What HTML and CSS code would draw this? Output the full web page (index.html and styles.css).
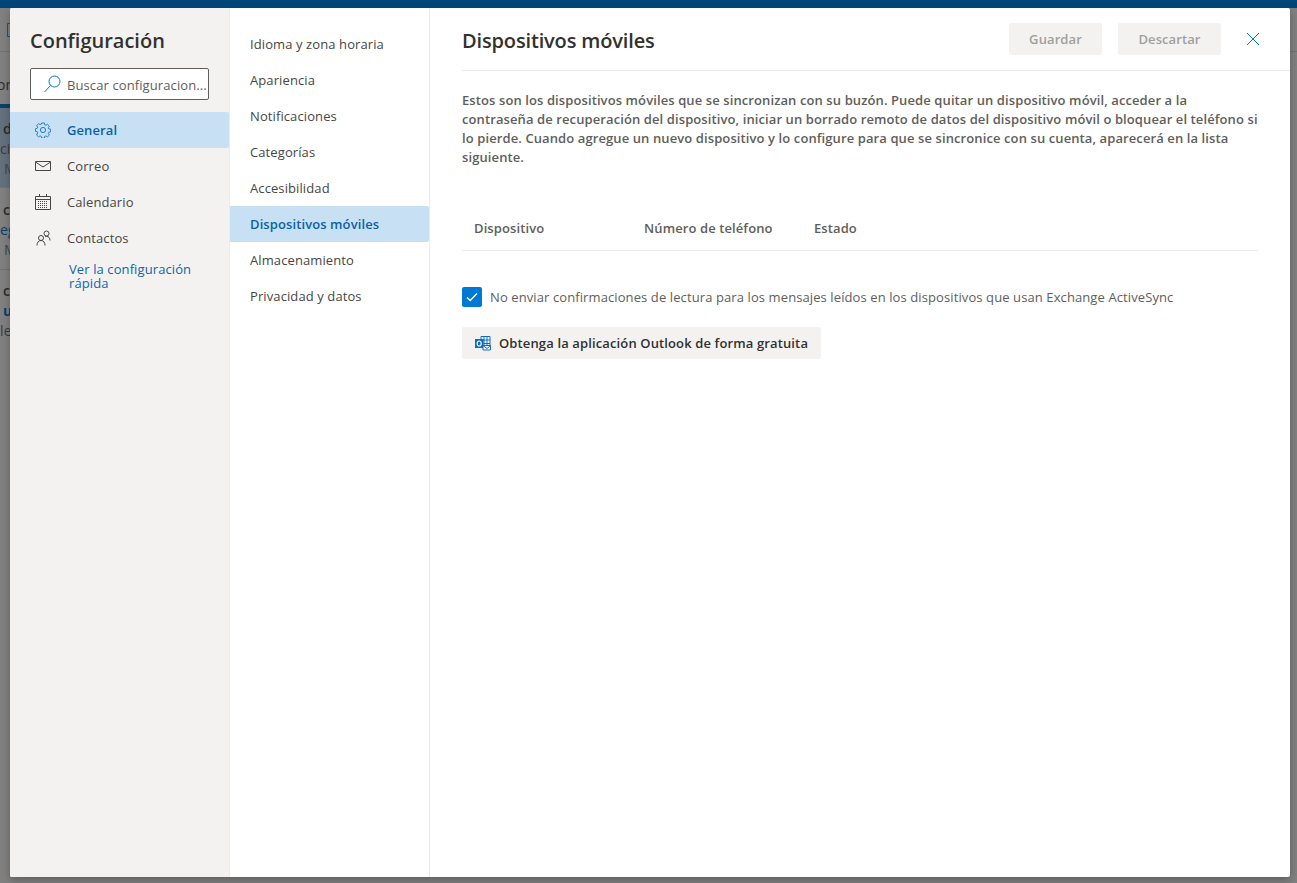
FILE: index.html
```html
<!DOCTYPE html>
<html lang="es">
<head>
<meta charset="utf-8">
<title>Configuración</title>
<link rel="stylesheet" href="styles.css">
</head>
<body>
<div class="topbar"></div>
<div class="backdrop">
  <div class="bg-tool"><svg class="bg-icon" width="8" height="14" viewBox="0 0 8 14"><path d="M.5.5h8v13h-8z" fill="none" stroke="#14568a"/></svg></div>
  <div class="bg-tab"><span class="bg-tab-text">or</span></div>
  <div class="bg-mail bg-selected"><span class="bg-a">d</span><span class="bg-b">ci</span><span class="bg-c">M</span></div>
  <div class="bg-mail bg-second"><span class="bg-a">c</span><span class="bg-link">eg</span><span class="bg-c">M</span></div>
  <div class="bg-mail bg-third"><span class="bg-a">c</span><span class="bg-link bg-link-bold">u</span><span class="bg-b">le</span></div>
</div>
<main class="dialog">
  <aside class="nav">
    <h1 class="nav-title">Configuración</h1>
    <div class="search">
      <svg class="search-icon" width="18" height="18" viewBox="0 0 18 18"><circle cx="11.500" cy="6.500" r="5.500" fill="none" stroke="#0078d4"/><path d="M7.500 10.500L1.500 17" stroke="#0078d4" fill="none"/></svg>
      <span class="search-text">Buscar configuracion...</span>
    </div>
    <ul class="nav-list">
      <li class="nav-item is-active">
        <svg width="16" height="16" viewBox="0 0 16 16" fill="none" stroke="#106ebe" stroke-width=".9"><circle cx="8" cy="8" r="2.600"/><path d="M6.600.6h2.800l.4 1.900 1.200.5 1.700-1 2 1.900-1.100 1.700.5 1.200 1.900.4v2.800l-1.900.4-.5 1.200 1.100 1.700-2 1.900-1.700-1-1.200.5-.4 1.900H6.600l-.4-1.900-1.200-.5-1.700 1-2-1.900L2.400 11l-.5-1.200L.1 9.400V6.600l1.800-.4.5-1.200-1.100-1.700 2-1.900 1.700 1 1.200-.5z" transform="translate(.4 .4) scale(.95)"/></svg>
        <span>General</span>
      </li>
      <li class="nav-item">
        <svg width="16" height="16" viewBox="0 0 16 16" fill="none" stroke="#484644"><path d="M.5 3.500h15v9H.5z"/><path d="M.5 4L8 9l7.500-5"/></svg>
        <span>Correo</span>
      </li>
      <li class="nav-item">
        <svg width="16" height="16" viewBox="0 0 16 16" fill="none" stroke="#484644"><path d="M.5 2.500h15v13H.5zM.5 5.500h15M4.500 0v3M11.500 0v3"/><path d="M3 7.500h10M3 9.500h10M3 11.500h10M3 13.500h10" stroke-dasharray="1 1"/></svg>
        <span>Calendario</span>
      </li>
      <li class="nav-item">
        <svg width="16" height="16" viewBox="0 0 16 16" fill="none" stroke="#484644"><circle cx="6" cy="8" r="2.500"/><circle cx="11.500" cy="3.500" r="2.500"/><path d="M2 15.500c0-3 1.500-5 4-5s4 2 4 5M10 7c.5-.5 1-.7 1.500-.7 2.200 0 3.500 1.700 3.500 4.200"/></svg>
        <span>Contactos</span>
      </li>
    </ul>
    <a class="quick-link">Ver la configuración rápida</a>
  </aside>
  <nav class="subnav">
    <div class="sub-item">Idioma y zona horaria</div>
    <div class="sub-item">Apariencia</div>
    <div class="sub-item">Notificaciones</div>
    <div class="sub-item">Categorías</div>
    <div class="sub-item">Accesibilidad</div>
    <div class="sub-item is-active">Dispositivos móviles</div>
    <div class="sub-item">Almacenamiento</div>
    <div class="sub-item">Privacidad y datos</div>
  </nav>
  <section class="content">
    <header class="content-head">
      <h2 class="content-title">Dispositivos móviles</h2>
      <div class="actions">
        <button class="btn btn-save">Guardar</button>
        <button class="btn btn-discard">Descartar</button>
        <svg class="close" width="14" height="14" viewBox="0 0 14 14"><path d="M1 1l12 12M13 1L1 13" stroke="#0078d4" fill="none"/></svg>
      </div>
    </header>
    <div class="body">
      <p class="intro">Estos son los dispositivos móviles que se sincronizan con su buzón. Puede quitar un dispositivo móvil, acceder a la contraseña de recuperación del dispositivo, iniciar un borrado remoto de datos del dispositivo móvil o bloquear el teléfono si lo pierde. Cuando agregue un nuevo dispositivo y lo configure para que se sincronice con su cuenta, aparecerá en la lista siguiente.</p>
      <div class="table-head">
        <span class="col">Dispositivo</span>
        <span class="col">Número de teléfono</span>
        <span class="col">Estado</span>
      </div>
      <label class="check-row">
        <span class="check"><svg width="12" height="10" viewBox="0 0 12 10"><path d="M1 5.500l3.200 3L11 1.500" stroke="#fff" stroke-width="1.300" fill="none"/></svg></span>
        <span>No enviar confirmaciones de lectura para los mensajes leídos en los dispositivos que usan Exchange ActiveSync</span>
      </label>
      <button class="btn-app">
        <svg width="16" height="16" viewBox="0 0 16 16"><path d="M6 1.500h9v11H6z" fill="#fff" stroke="#0f6cbd"/><path d="M9 1.500v11M12 1.500v11M6 5h9M6 8.500h9" stroke="#0f6cbd" fill="none"/><path d="M0 4h8.500v9H0z" fill="#0f6cbd"/><ellipse cx="4.200" cy="8.500" rx="2" ry="2.500" fill="none" stroke="#fff" stroke-width="1.200"/><path d="M8 10.500h7.500v4.500H8z" fill="#fff" stroke="#0f6cbd"/><path d="M8 10.500l4 3 3.500-3" fill="none" stroke="#0f6cbd"/></svg>
        <span>Obtenga la aplicación Outlook de forma gratuita</span>
      </button>
    </div>
  </section>
</main>
</body>
</html>
```
FILE: styles.css
```css
* { box-sizing: border-box; }
html, body { margin: 0; height: 100%; }
body {
  width: 1297px;
  height: 883px;
  overflow: hidden;
  position: relative;
  background: #808080;
  font-family: "Open Sans", "Noto Sans", sans-serif;
  font-size: 13px;
  letter-spacing: .1px;
  color: #323130;
}
.topbar { height: 8px; background: #004578; position: relative; z-index: 2; }
.backdrop { font-size: 14px; color: #2b2b2b; overflow: hidden; }
.bg-tool { height: 44px; padding: 15px 0 0 7px; border-bottom: 1px solid #727272; }
.bg-icon { display: block; }
.bg-tab { width: 30px; height: 56px; padding-top: 23px; line-height: 20px; border-bottom: 4px solid #08416e; white-space: nowrap; overflow: hidden; }
.bg-tab-text { display: block; margin-left: -3px; }
.bg-mail { width: 30px; display: flex; flex-direction: column; line-height: 20px; border-bottom: 1px solid #727272; }
.bg-selected { height: 80px; padding: 11px 0 0 2px; background: #64717d; }
.bg-second { height: 82px; padding: 12px 0 0 2px; }
.bg-third { height: 82px; padding: 11px 0 0 2px; border-bottom: 0; }
.bg-a { font-weight: 600; padding-left: 1px; height: 20px; }
.bg-b { color: #3a3a3a; height: 20px; margin-left: -2px; }
.bg-c { color: #444; height: 20px; padding-left: 2px; }
.bg-link { color: #08416e; height: 20px; margin-left: -2px; }
.bg-link-bold { margin-left: 1px; font-weight: 700; }

.dialog {
  position: absolute;
  left: 10px;
  top: 8px;
  width: 1280px;
  height: 869px;
  display: flex;
  background: #fff;
  border-radius: 2px;
  overflow: hidden;
  box-shadow: 0 3px 8px rgba(0, 0, 0, .28);
}
.nav { flex: 0 0 220px; background: #f3f2f1; border-right: 1px solid #edebe9; padding-top: 18px; }
.nav-title { margin: 0 0 13px 20px; font-size: 20px; line-height: 29px; font-weight: 600; letter-spacing: 0; color: #323130; }
.search {
  display: flex;
  align-items: center;
  margin-left: 20px;
  width: 179px;
  height: 32px;
  padding-left: 12px;
  background: #fff;
  border: 1px solid #605e5c;
  border-radius: 2px;
  white-space: nowrap;
}
.search-icon { flex: none; margin-right: 6px; }
.search-text { color: #605e5c; overflow: hidden; padding-top: 1px; }
.nav-list { list-style: none; margin: 12px 0 0; padding: 0; }
.nav-item { display: flex; align-items: center; height: 36px; padding-left: 25px; gap: 16px; color: #484644; }
.nav-item.is-active { background: #c7e0f4; color: #0b62a8; font-weight: 600; border-radius: 0 2px 2px 0; }
.quick-link { display: block; margin: 6px 0 0 59px; width: 140px; line-height: 14px; color: #0f66ad; }

.subnav { flex: 0 0 200px; border-right: 1px solid #edebe9; padding-top: 18px; }
.sub-item { height: 36px; line-height: 36px; padding-left: 20px; color: #484644; white-space: nowrap; }
.sub-item.is-active { background: #c7e0f4; color: #0b62a8; font-weight: 600; border-radius: 0 2px 2px 0; }

.content { flex: 1; min-width: 0; }
.content-head { display: flex; align-items: center; height: 63px; margin-left: 32px; padding-bottom: 1px; border-bottom: 1px solid #edebe9; }
.content-title { flex: 1; margin: 0; padding-top: 4px; font-size: 20px; font-weight: 600; line-height: 29px; letter-spacing: -.15px; color: #323130; }
.actions { display: flex; align-items: center; }
.btn { height: 32px; border: 0; border-radius: 2px; padding: 0; background: #f3f2f1; color: #a19f9d; font: 600 13px "Open Sans", "Noto Sans", sans-serif; letter-spacing: .1px; }
.btn-save { width: 93px; margin-right: 16px; }
.btn-discard { width: 103px; margin-right: 25px; }
.close { margin-right: 30px; }
.body { margin-left: 32px; width: 796px; padding-top: 20px; }
.intro { margin: 0; font-weight: 600; line-height: 19px; color: #605e5c; }
.table-head { display: flex; align-items: center; height: 44px; margin-top: 40px; padding-bottom: 2px; border-bottom: 1px solid #edebe9; color: #605e5c; font-weight: 600; }
.col { width: 170px; padding-left: 12px; white-space: nowrap; }
.check-row { display: flex; align-items: center; gap: 8px; margin-top: 36px; height: 20px; color: #605e5c; white-space: nowrap; }
.check { display: flex; align-items: center; justify-content: center; width: 20px; height: 20px; background: #0078d4; border-radius: 2px; }
.btn-app {
  display: flex;
  align-items: center;
  gap: 8px;
  width: 359px;
  height: 32px;
  margin-top: 20px;
  padding: 0 0 0 13px;
  border: 0;
  border-radius: 2px;
  background: #f3f2f1;
  color: #323130;
  font: 600 13px "Open Sans", "Noto Sans", sans-serif;
  letter-spacing: .13px;
  white-space: nowrap;
}
```
